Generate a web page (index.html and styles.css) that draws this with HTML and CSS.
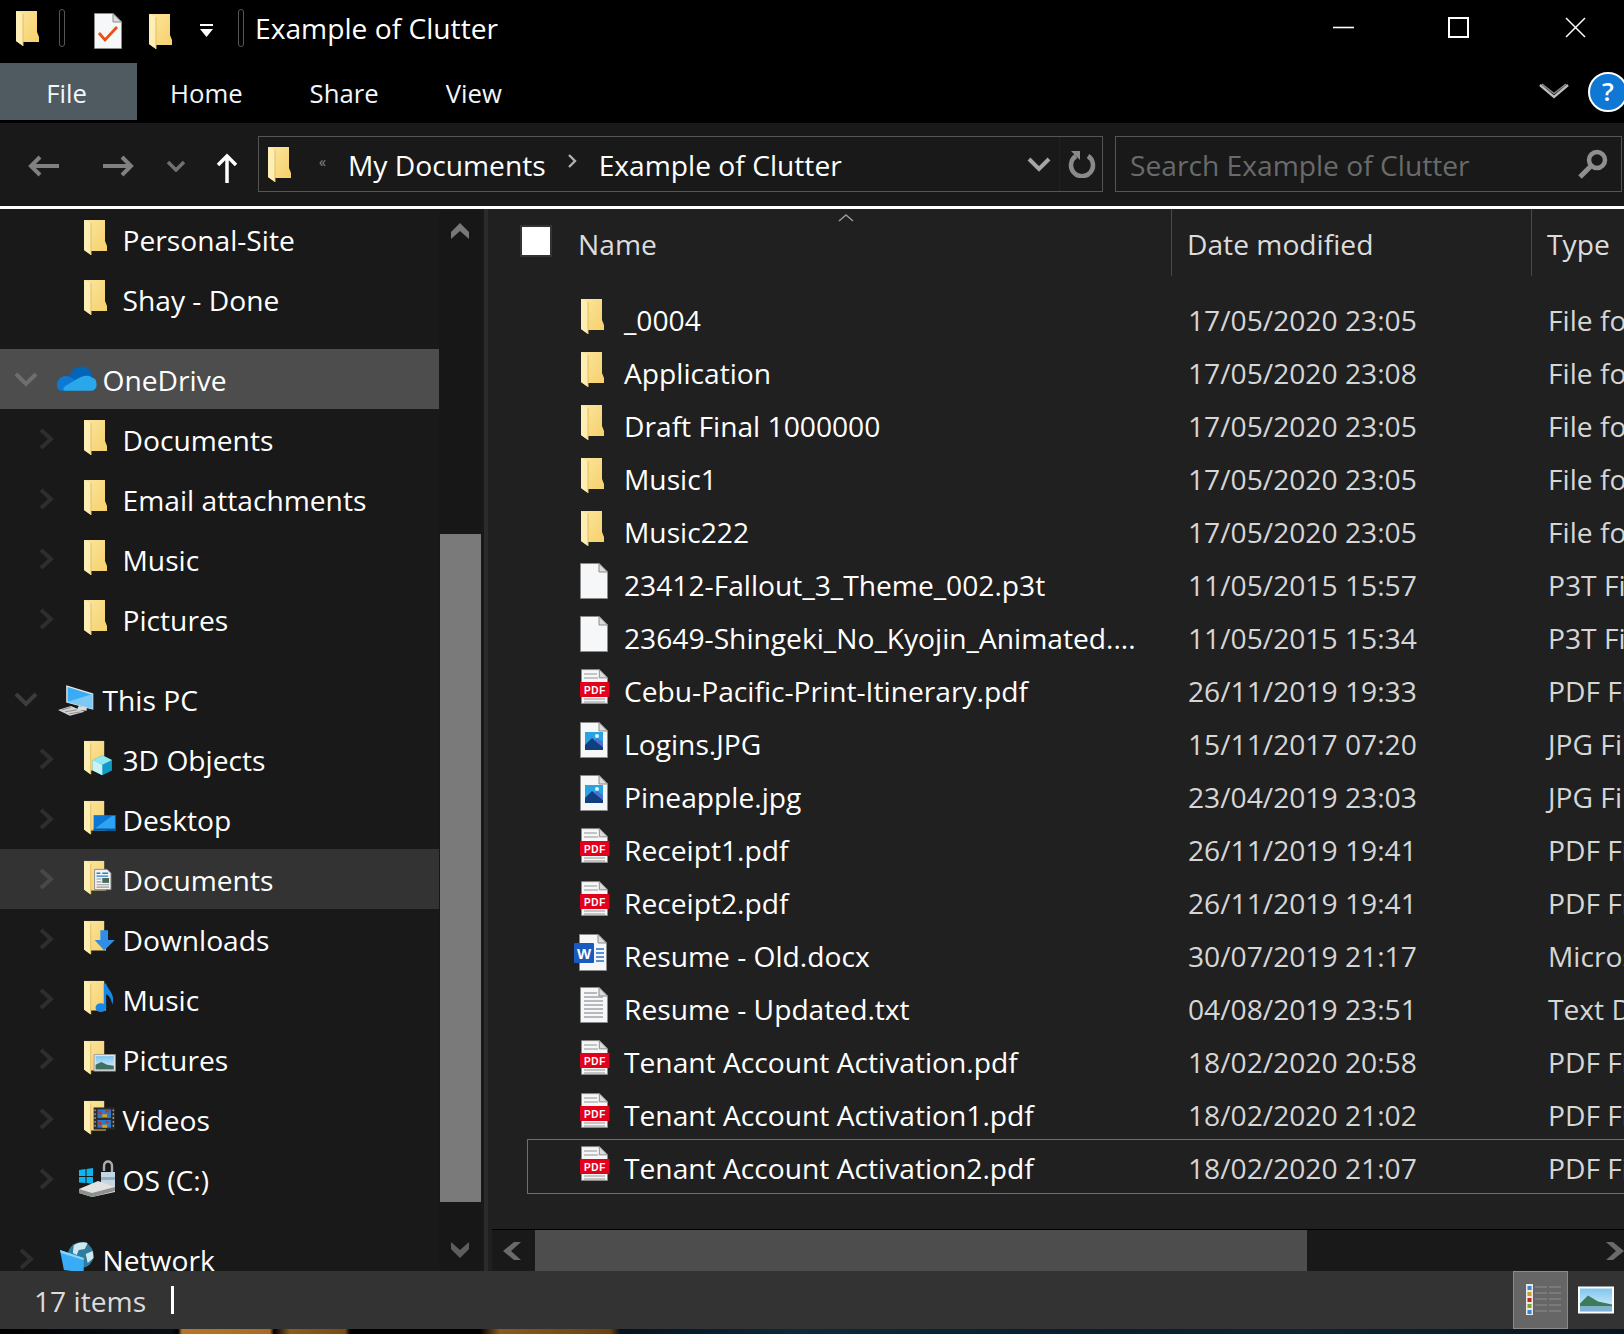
FILE: index.html
```html
<!DOCTYPE html>
<html lang="en">
<head>
    <meta charset="UTF-8">
    <title>Example of Clutter</title>
    <link rel="stylesheet" href="styles.css">
</head>
<body>
    <svg class="sprite" xmlns="http://www.w3.org/2000/svg">
        <defs>
            <linearGradient id="fold" x1="0" y1="0" x2="1" y2="1">
                <stop offset="0" stop-color="#fbe6a0"/>
                <stop offset="1" stop-color="#f6cf68"/>
            </linearGradient>
            <linearGradient id="sky" x1="0" y1="0" x2="0" y2="1">
                <stop offset="0" stop-color="#7cc4ef"/>
                <stop offset="1" stop-color="#e4f3fb"/>
            </linearGradient>
            <symbol id="folder" viewBox="0 0 23 35">
                <path d="M0 0H21V21L23 26V31H7V35L0 30Z" fill="url(#fold)"/>
                <path d="M0 0L7 3V35L0 30Z" fill="#fdeeb4"/>
                <path d="M7 3V35" stroke="#e7bd5c" stroke-width="1"/>
            </symbol>
            <symbol id="ic-3d" viewBox="0 0 40 38">
                <use href="#folder" x="0" y="0" width="23" height="35"/>
                <path d="M19 15L29 20V31L19 36L9 31V20Z" fill="#0f9bc4"/>
                <path d="M19 15L29 20L19 25L9 20Z" fill="#8fe8f0"/>
                <path d="M9 20L19 25V36L9 31Z" fill="#c9f3f5"/>
            </symbol>
            <symbol id="ic-desk" viewBox="0 0 40 38">
                <use href="#folder" x="0" y="0" width="23" height="35"/>
                <rect x="10" y="15" width="23" height="16" fill="#0a78d7"/>
                <path d="M11 29L29 16H32V29Z" fill="#2ea3f2"/>
                <rect x="10" y="29" width="23" height="2" fill="#075c9f"/>
            </symbol>
            <symbol id="ic-docs" viewBox="0 0 40 38">
                <use href="#folder" x="0" y="0" width="23" height="35"/>
                <path d="M11 9H24L28 13V30H11Z" fill="#f3f3f3" stroke="#8c8c8c"/>
                <path d="M13 13H17M19 13H25M13 16H25" stroke="#2a7fd0" stroke-width="1.4"/>
                <rect x="19" y="18" width="7" height="5" fill="#47695c"/>
                <path d="M13 19H18M13 22H18M13 25H26M13 27.500H26" stroke="#9a9a9a" stroke-width="1.2"/>
            </symbol>
            <symbol id="ic-down" viewBox="0 0 40 38">
                <use href="#folder" x="0" y="0" width="23" height="35"/>
                <path d="M17 10H25V20H32L21 31L11 20H17Z" fill="#2f8fe6"/>
            </symbol>
            <symbol id="ic-note" viewBox="0 0 40 38">
                <use href="#folder" x="0" y="0" width="23" height="35"/>
                <ellipse cx="17.500" cy="28" rx="5.500" ry="4.500" fill="#1888e8"/>
                <path d="M20.500 28V3H23C24 9 33 13 29.500 25C28.500 19 26 15 23 14V28Z" fill="#1888e8"/>
            </symbol>
            <symbol id="ic-pics" viewBox="0 0 40 38">
                <use href="#folder" x="0" y="0" width="23" height="35"/>
                <rect x="10.500" y="14.500" width="22" height="17" fill="#f2f2f2" stroke="#9a9a9a"/>
                <rect x="12" y="16" width="19" height="14" fill="url(#sky)"/>
                <path d="M12 25L18 22L24 25L31 26V30H12Z" fill="#3f6f62"/>
            </symbol>
            <symbol id="ic-vid" viewBox="0 0 40 38">
                <use href="#folder" x="0" y="0" width="23" height="35"/>
                <rect x="10" y="7" width="22" height="23" fill="#2a2a2a"/>
                <path d="M11.500 9V29M30.500 9V29" stroke="#9a9a9a" stroke-width="1.500" stroke-dasharray="2 2"/>
                <rect x="14" y="9" width="14" height="9" fill="#2f78c8"/>
                <rect x="14" y="20" width="14" height="8" fill="#2f78c8"/>
                <path d="M15 11H18V14H15ZM22 10H26V12H22ZM15 22H18V25H15ZM22 21H26V23H22Z" fill="#c5302a"/>
                <path d="M19 14H24V17H19ZM19 25H24V28H19Z" fill="#d9a21e"/>
            </symbol>
            <symbol id="ic-os" viewBox="0 0 40 38">
                <path d="M0 10L6.500 9V16H0ZM7.500 9L14 8V16H7.500ZM0 17H6.500V23L0 22.500ZM7.500 17H14V24L7.500 23Z" fill="#0cb4f0"/>
                <path d="M25 11V6C25 0 33 0 33 6V13" fill="none" stroke="#a8aeb2" stroke-width="2.400"/>
                <path d="M22 12H36V27L22 28Z" fill="#c3d6e2"/>
                <path d="M22 17H36V20H22Z" fill="#8eb0c3"/>
                <path d="M0 29L19 21L36 27V32L13 37L0 33Z" fill="#e2e2e2"/>
                <path d="M0 29L13 33L36 27V31L13 37L0 33Z" fill="#8f8f8f"/>
                <rect x="11" y="33.500" width="2" height="2" fill="#2fbf4d"/>
            </symbol>
            <symbol id="ic-cloud" viewBox="0 0 46 38">
                <path d="M13 16C14 9 22 5 28 7C32 8 35 11 36 15L30 24H13Z" fill="#0364b8"/>
                <path d="M0 25C0 20 4 16 9 16C11 16 13 17 15 18L24 24L10 31H5C2 31 0 28 0 25Z" fill="#0f78d4"/>
                <path d="M9 31C5 31 6 27 10 25L22 18C25 16 29 15 32 16C33 16 35 17 36 18C39 18 40 21 40 25C40 29 37 31 34 31Z" fill="#28a8ea"/>
            </symbol>
            <symbol id="ic-pc" viewBox="0 0 46 38">
                <path d="M10 6L36 14V29L10 22Z" fill="#38adf5" stroke="#e4e4e4" stroke-width="1.400"/>
                <path d="M10 22L36 14V29Z" fill="#7cc9f7"/>
                <path d="M22 26L30 27V31L20 30Z" fill="#dcdcdc"/>
                <path d="M1 30L14 26L28 32L13 36Z" fill="#d3d3d3"/>
                <path d="M5 30L14 27.500M8 32L20 30M12 34L24 32" stroke="#8f8f8f"/>
            </symbol>
            <symbol id="ic-net" viewBox="0 0 46 38">
                <circle cx="24" cy="15" r="13" fill="#2f7d9e"/>
                <path d="M17 5C21 2 28 1 31 3L28 9L22 10L20 15L16 13ZM29 14L36 11L37 18L31 23Z" fill="#cfe8ef"/>
                <path d="M3 10L27 18V33L7 30Z" fill="#38adf5"/>
                <path d="M3 10L27 18V20L4 13Z" fill="#8ad3fa"/>
            </symbol>
            <symbol id="ic-blank" viewBox="0 0 28 36">
                <path d="M.5.5H19L27.500 9V35.500H.5Z" fill="#f6f7f9" stroke="#8b8b8b"/>
                <path d="M19 .5V9H27.500Z" fill="#dcdcdc" stroke="#8b8b8b"/>
            </symbol>
            <symbol id="ic-pdf" viewBox="0 0 32 36">
                <use href="#ic-blank" x="1" y="0" width="27" height="35"/>
                <path d="M4 5H17M4 9H18M4 30H25M4 33H25" stroke="#b5b5b5" stroke-width="1.400"/>
                <rect x="0" y="13" width="29.500" height="15" fill="#e3001b"/>
                <text x="15" y="24.500" text-anchor="middle" font-family="Liberation Sans" font-weight="700" font-size="10" letter-spacing=".6" fill="#fff">PDF</text>
            </symbol>
            <symbol id="ic-img" viewBox="0 0 28 36">
                <use href="#ic-blank" x="0" y="0" width="28" height="36"/>
                <rect x="5" y="10" width="18" height="18" fill="#29a3e2"/>
                <circle cx="17" cy="14" r="2" fill="#dff4ff"/>
                <path d="M5 23L12 16L23 25V28H5Z" fill="#0f3f80"/>
                <path d="M14 18L17 16L23 20V25Z" fill="#4c6fd0"/>
            </symbol>
            <symbol id="ic-word" viewBox="0 0 34 37">
                <path d="M5.500.5H24L32.500 9V36.500H5.500Z" fill="#f6f7f9" stroke="#8b8b8b"/>
                <path d="M24 .5V9H32.500Z" fill="#dcdcdc" stroke="#8b8b8b"/>
                <path d="M22 15H30M22 19H30M22 23H30M22 27H30" stroke="#2a6fc8" stroke-width="1.300"/>
                <rect x="0" y="9" width="20" height="20" rx="1" fill="#185abd"/>
                <text x="10" y="24.500" text-anchor="middle" font-family="Liberation Sans" font-weight="700" font-size="15" fill="#fff">W</text>
            </symbol>
            <symbol id="ic-txt" viewBox="0 0 28 36">
                <use href="#ic-blank" x="0" y="0" width="28" height="36"/>
                <path d="M4 6H17M4 10H23M4 14H23M4 18H23M4 22H23M4 26H23M4 30H23" stroke="#a2a5a8" stroke-width="1.500"/>
            </symbol>
        </defs>
    </svg>

    <div class="window">
        <div class="titlebar">
            <svg class="folder-sm"><use href="#folder"/></svg>
            <span class="qat-sep first"></span>
            <svg class="todo" viewBox="0 0 28 36">
                <use href="#ic-blank"/>
                <path d="M5 20L11 27L23 14" fill="none" stroke="#ea4f16" stroke-width="2.800"/>
            </svg>
            <svg class="folder-sm second"><use href="#folder"/></svg>
            <svg class="qat-caret" viewBox="0 0 13 14">
                <rect width="13" height="2" y="0" fill="#fff"/>
                <path d="M0 5H13L6.500 13Z" fill="#fff"/>
            </svg>
            <span class="qat-sep"></span>
            <span class="win-title">Example of Clutter</span>
            <div class="win-btns">
                <svg viewBox="0 0 21 21"><path d="M0 10.500H21" stroke="#fff" stroke-width="1.600"/></svg>
                <svg viewBox="0 0 21 21"><rect x="1" y="1" width="19" height="19" fill="none" stroke="#fff" stroke-width="2"/></svg>
                <svg viewBox="0 0 21 21"><path d="M1 1L20 20M20 1L1 20" stroke="#fff" stroke-width="1.500"/></svg>
            </div>
        </div>

        <div class="ribbon">
            <div class="tab tab-file">File</div>
            <div class="tab">Home</div>
            <div class="tab">Share</div>
            <div class="tab">View</div>
            <svg class="collapse" viewBox="0 0 30 18">
                <path d="M1 2L15 14L29 2" fill="none" stroke="#bcbcbc" stroke-width="2.400"/>
                <path d="M3 1L15 10.500L27 1" fill="none" stroke="#8a8a8a" stroke-width="1.500"/>
            </svg>
            <div class="help">?</div>
        </div>

        <div class="addr-row">
            <svg class="nav-ic back" viewBox="0 0 31 22"><path d="M12 2L3 11L12 20M3 11H31" fill="none" stroke="#808080" stroke-width="4"/></svg>
            <svg class="nav-ic fwd" viewBox="0 0 31 22"><path d="M19 2L28 11L19 20M28 11H0" fill="none" stroke="#808080" stroke-width="4"/></svg>
            <svg class="nav-ic drop" viewBox="0 0 20 12"><path d="M2 2L10 10L18 2" fill="none" stroke="#707070" stroke-width="3.500"/></svg>
            <svg class="nav-ic up" viewBox="0 0 22 30"><path d="M2 12L11 3L20 12M11 3V30" fill="none" stroke="#fff" stroke-width="3.500"/></svg>
            <div class="addr-box">
                <svg class="addr-folder"><use href="#folder"/></svg>
                <span class="crumb-more">«</span>
                <span class="crumb">My Documents</span>
                <svg class="crumb-arrow" viewBox="0 0 10 14"><path d="M2 1L8 7L2 13" fill="none" stroke="#b0b0b0" stroke-width="2.400"/></svg>
                <span class="crumb">Example of Clutter</span>
                <svg class="addr-drop" viewBox="0 0 24 15"><path d="M2 2L12 12L22 2" fill="none" stroke="#a5a5a5" stroke-width="4"/></svg>
                <span class="addr-div"></span>
                <svg class="refresh" viewBox="0 0 28 28">
                    <path d="M8 6A11 11 0 1 0 20 6" fill="none" stroke="#8a8a8a" stroke-width="4.500"/>
                    <path d="M3 1H12V10Z" fill="#8a8a8a"/>
                </svg>
            </div>
            <div class="search-box">
                <span class="search-text">Search Example of Clutter</span>
                <svg class="search-ic" viewBox="0 0 30 30">
                    <circle cx="19" cy="11" r="8" fill="none" stroke="#8f8f8f" stroke-width="4.500"/>
                    <path d="M13 17L2 28" stroke="#8f8f8f" stroke-width="5"/>
                </svg>
            </div>
        </div>

        <div class="main">
            <div class="nav-pane">
                <div class="tree">
                    <div class="node child"><span class="chev"></span><svg class="node-ic"><use href="#folder" width="23" height="35"/></svg><span>Personal-Site</span></div>
                    <div class="node child"><span class="chev"></span><svg class="node-ic"><use href="#folder" width="23" height="35"/></svg><span>Shay - Done</span></div>

                    <div class="node root active group"><svg class="chev-down" viewBox="0 0 24 15"><path d="M2 2L12 12L22 2" fill="none" stroke="#6e6e6e" stroke-width="4"/></svg><svg class="root-ic"><use href="#ic-cloud"/></svg><span>OneDrive</span></div>
                    <div class="node child"><svg class="chev" viewBox="0 0 15 22"><path d="M2 2L12 11L2 20" fill="none" stroke="#2e2e2e" stroke-width="4"/></svg><svg class="node-ic"><use href="#folder" width="23" height="35"/></svg><span>Documents</span></div>
                    <div class="node child"><svg class="chev" viewBox="0 0 15 22"><path d="M2 2L12 11L2 20" fill="none" stroke="#2e2e2e" stroke-width="4"/></svg><svg class="node-ic"><use href="#folder" width="23" height="35"/></svg><span>Email attachments</span></div>
                    <div class="node child"><svg class="chev" viewBox="0 0 15 22"><path d="M2 2L12 11L2 20" fill="none" stroke="#2e2e2e" stroke-width="4"/></svg><svg class="node-ic"><use href="#folder" width="23" height="35"/></svg><span>Music</span></div>
                    <div class="node child"><svg class="chev" viewBox="0 0 15 22"><path d="M2 2L12 11L2 20" fill="none" stroke="#2e2e2e" stroke-width="4"/></svg><svg class="node-ic"><use href="#folder" width="23" height="35"/></svg><span>Pictures</span></div>

                    <div class="node root group"><svg class="chev-down" viewBox="0 0 24 15"><path d="M2 2L12 12L22 2" fill="none" stroke="#3c3c3c" stroke-width="4"/></svg><svg class="root-ic"><use href="#ic-pc"/></svg><span>This PC</span></div>
                    <div class="node child"><svg class="chev" viewBox="0 0 15 22"><path d="M2 2L12 11L2 20" fill="none" stroke="#2e2e2e" stroke-width="4"/></svg><svg class="node-ic"><use href="#ic-3d"/></svg><span>3D Objects</span></div>
                    <div class="node child"><svg class="chev" viewBox="0 0 15 22"><path d="M2 2L12 11L2 20" fill="none" stroke="#2e2e2e" stroke-width="4"/></svg><svg class="node-ic"><use href="#ic-desk"/></svg><span>Desktop</span></div>
                    <div class="node child hover"><svg class="chev" viewBox="0 0 15 22"><path d="M2 2L12 11L2 20" fill="none" stroke="#484848" stroke-width="4"/></svg><svg class="node-ic"><use href="#ic-docs"/></svg><span>Documents</span></div>
                    <div class="node child"><svg class="chev" viewBox="0 0 15 22"><path d="M2 2L12 11L2 20" fill="none" stroke="#2e2e2e" stroke-width="4"/></svg><svg class="node-ic"><use href="#ic-down"/></svg><span>Downloads</span></div>
                    <div class="node child"><svg class="chev" viewBox="0 0 15 22"><path d="M2 2L12 11L2 20" fill="none" stroke="#2e2e2e" stroke-width="4"/></svg><svg class="node-ic"><use href="#ic-note"/></svg><span>Music</span></div>
                    <div class="node child"><svg class="chev" viewBox="0 0 15 22"><path d="M2 2L12 11L2 20" fill="none" stroke="#2e2e2e" stroke-width="4"/></svg><svg class="node-ic"><use href="#ic-pics"/></svg><span>Pictures</span></div>
                    <div class="node child"><svg class="chev" viewBox="0 0 15 22"><path d="M2 2L12 11L2 20" fill="none" stroke="#2e2e2e" stroke-width="4"/></svg><svg class="node-ic"><use href="#ic-vid"/></svg><span>Videos</span></div>
                    <div class="node child"><svg class="chev" viewBox="0 0 15 22"><path d="M2 2L12 11L2 20" fill="none" stroke="#2e2e2e" stroke-width="4"/></svg><svg class="node-ic os"><use href="#ic-os"/></svg><span>OS (C:)</span></div>

                    <div class="node root group"><svg class="chev net" viewBox="0 0 15 22"><path d="M2 2L12 11L2 20" fill="none" stroke="#2e2e2e" stroke-width="4"/></svg><svg class="root-ic"><use href="#ic-net"/></svg><span>Network</span></div>
                </div>
                <div class="v-scroll">
                    <svg class="v-arrow" viewBox="0 0 18 16"><path d="M0 16V9L9 0L18 9V16L9 8Z" fill="#787878"/></svg>
                    <div class="v-thumb"></div>
                    <svg class="v-arrow down" viewBox="0 0 18 16"><path d="M0 0V7L9 16L18 7V0L9 8Z" fill="#5e5e5e"/></svg>
                </div>
            </div>
            <div class="splitter"></div>

            <div class="list-pane">
                <div class="list-head">
                    <div class="col col-name">
                        <span class="check"></span>
                        <span>Name</span>
                        <svg class="sort" viewBox="0 0 16 8"><path d="M1 7L8 1L15 7" fill="none" stroke="#9a9a9a" stroke-width="1.500"/></svg>
                    </div>
                    <div class="col col-date">Date modified</div>
                    <div class="col col-type">Type</div>
                </div>
                <div class="rows">
                    <div class="row"><svg class="f-ic folder"><use href="#folder" width="23" height="35"/></svg><span>_0004</span><span class="dim">17/05/2020 23:05</span><span class="dim">File folder</span></div>
                    <div class="row"><svg class="f-ic folder"><use href="#folder" width="23" height="35"/></svg><span>Application</span><span class="dim">17/05/2020 23:08</span><span class="dim">File folder</span></div>
                    <div class="row"><svg class="f-ic folder"><use href="#folder" width="23" height="35"/></svg><span>Draft Final 1000000</span><span class="dim">17/05/2020 23:05</span><span class="dim">File folder</span></div>
                    <div class="row"><svg class="f-ic folder"><use href="#folder" width="23" height="35"/></svg><span>Music1</span><span class="dim">17/05/2020 23:05</span><span class="dim">File folder</span></div>
                    <div class="row"><svg class="f-ic folder"><use href="#folder" width="23" height="35"/></svg><span>Music222</span><span class="dim">17/05/2020 23:05</span><span class="dim">File folder</span></div>
                    <div class="row"><svg class="f-ic"><use href="#ic-blank" width="28" height="36"/></svg><span>23412-Fallout_3_Theme_002.p3t</span><span class="dim">11/05/2015 15:57</span><span class="dim">P3T File</span></div>
                    <div class="row"><svg class="f-ic"><use href="#ic-blank" width="28" height="36"/></svg><span>23649-Shingeki_No_Kyojin_Animated....</span><span class="dim">11/05/2015 15:34</span><span class="dim">P3T File</span></div>
                    <div class="row"><svg class="f-ic"><use href="#ic-pdf" width="32" height="36"/></svg><span>Cebu-Pacific-Print-Itinerary.pdf</span><span class="dim">26/11/2019 19:33</span><span class="dim">PDF File</span></div>
                    <div class="row"><svg class="f-ic"><use href="#ic-img" width="28" height="36"/></svg><span>Logins.JPG</span><span class="dim">15/11/2017 07:20</span><span class="dim">JPG File</span></div>
                    <div class="row"><svg class="f-ic"><use href="#ic-img" width="28" height="36"/></svg><span>Pineapple.jpg</span><span class="dim">23/04/2019 23:03</span><span class="dim">JPG File</span></div>
                    <div class="row"><svg class="f-ic"><use href="#ic-pdf" width="32" height="36"/></svg><span>Receipt1.pdf</span><span class="dim">26/11/2019 19:41</span><span class="dim">PDF File</span></div>
                    <div class="row"><svg class="f-ic"><use href="#ic-pdf" width="32" height="36"/></svg><span>Receipt2.pdf</span><span class="dim">26/11/2019 19:41</span><span class="dim">PDF File</span></div>
                    <div class="row"><svg class="f-ic word"><use href="#ic-word" width="34" height="37"/></svg><span>Resume - Old.docx</span><span class="dim">30/07/2019 21:17</span><span class="dim">Microsoft Word Document</span></div>
                    <div class="row"><svg class="f-ic"><use href="#ic-txt" width="28" height="36"/></svg><span>Resume - Updated.txt</span><span class="dim">04/08/2019 23:51</span><span class="dim">Text Document</span></div>
                    <div class="row"><svg class="f-ic"><use href="#ic-pdf" width="32" height="36"/></svg><span>Tenant Account Activation.pdf</span><span class="dim">18/02/2020 20:58</span><span class="dim">PDF File</span></div>
                    <div class="row"><svg class="f-ic"><use href="#ic-pdf" width="32" height="36"/></svg><span>Tenant Account Activation1.pdf</span><span class="dim">18/02/2020 21:02</span><span class="dim">PDF File</span></div>
                    <div class="row selected"><svg class="f-ic"><use href="#ic-pdf" width="32" height="36"/></svg><span>Tenant Account Activation2.pdf</span><span class="dim">18/02/2020 21:07</span><span class="dim">PDF File</span></div>
                </div>
                <div class="h-scroll">
                    <div class="h-btn"><svg viewBox="0 0 18 18"><path d="M18 0H11L0 9L11 18H18L8 9Z" fill="#6a6a6a"/></svg></div>
                    <div class="h-thumb"></div>
                    <div class="h-btn right"><svg viewBox="0 0 18 18"><path d="M0 0H7L18 9L7 18H0L10 9Z" fill="#6a6a6a"/></svg></div>
                </div>
            </div>
        </div>

        <div class="statusbar">
            <span class="count">17 items</span>
            <span class="status-sep"></span>
            <div class="view-btn on">
                <svg viewBox="0 0 36 32">
                    <rect x="0" y="0" width="7" height="31" fill="#e8e8e8"/>
                    <rect x="1.500" y="2" width="4" height="4" fill="#3a86c8"/>
                    <rect x="1.500" y="8" width="4" height="4" fill="#c9a227"/>
                    <rect x="1.500" y="14" width="4" height="4" fill="#c4281c"/>
                    <rect x="1.500" y="20" width="4" height="4" fill="#7fa32a"/>
                    <rect x="1.500" y="26" width="4" height="4" fill="#3a86c8"/>
                    <path d="M9 3H21M9 9H21M9 15H21M9 21H21M9 27H21M23 3H35M23 9H35M23 15H35M23 21H35M23 27H35" stroke="#8e8e8e" stroke-width="1"/>
                </svg>
            </div>
            <div class="view-btn">
                <svg viewBox="0 0 36 27">
                    <rect x="1" y="1" width="34" height="25" fill="url(#sky)" stroke="#fff" stroke-width="2"/>
                    <path d="M2 17L10 9L20 15L34 18V20H2Z" fill="#3c7a5c"/>
                    <rect x="2" y="20" width="32" height="5" fill="#7fb4d8"/>
                </svg>
            </div>
        </div>
        <div class="wallpaper"></div>
    </div>
</body>
</html>
```

FILE: styles.css
```css
* {
    margin: 0;
    padding: 0;
    box-sizing: border-box;
}

html, body {
    height: 100%;
    background: #000;
    overflow: hidden;
}

body {
    font-family: "Open Sans", "Noto Sans", sans-serif;
    color: #fff;
}

svg {
    display: block;
    flex: none;
}

.sprite {
    width: 0;
    height: 0;
}

.window {
    width: 1624px;
    height: 1334px;
    display: flex;
    flex-direction: column;
    overflow: hidden;
}

/* title bar */
.titlebar {
    height: 63px;
    padding: 0 38px 7px 16px;
    display: flex;
    align-items: center;
    flex: none;
}

.folder-sm {
    width: 23px;
    height: 35px;
}

.folder-sm.second {
    margin-left: 27px;
    margin-top: 6px;
}

.qat-sep {
    width: 6px;
    height: 38px;
    border: 1px solid #555;
    border-radius: 3px;
    margin-left: 25px;
}

.qat-sep.first {
    margin-left: 20px;
}

.todo {
    width: 28px;
    height: 36px;
    margin-left: 29px;
    margin-top: 6px;
}

.qat-caret {
    width: 13px;
    height: 14px;
    margin-left: 28px;
    margin-top: 6px;
}

.win-title {
    margin-left: 11px;
    font-size: 28.2px;
    line-height: 40px;
}

.win-btns {
    margin-left: auto;
    display: flex;
    gap: 96px;
    margin-bottom: 2px;
}

.win-btns svg {
    width: 21px;
    height: 21px;
}

.win-btns svg:first-child {
    margin-right: -2px;
}

/* ribbon tabs */
.ribbon {
    height: 60px;
    display: flex;
    align-items: flex-start;
    flex: none;
}

.tab {
    height: 57px;
    line-height: 61px;
    font-size: 25.7px;
    margin-left: 67px;
    color: #f2f7fb;
}

.tab-file {
    width: 137px;
    margin: 0;
    padding-right: 4px;
    background: #4f5b60;
    text-align: center;
}

.tab-file + .tab {
    margin-left: 33px;
}

.collapse {
    width: 30px;
    height: 18px;
    margin: 20px 0 0 auto;
}

.help {
    width: 40px;
    height: 40px;
    border-radius: 50%;
    background: #0f78d4;
    border: 2px solid #fff;
    margin: 9px -4px 0 19px;
    text-align: center;
    font-size: 26px;
    line-height: 34px;
    font-weight: 600;
}

/* address row */
.addr-row {
    height: 86px;
    flex: none;
    background: #191919;
    border-bottom: 3px solid #fff;
    padding: 13px 2px 0 0;
    display: flex;
    align-items: flex-start;
}

.nav-ic {
    margin-top: 19px;
}

.back {
    width: 31px;
    height: 22px;
    margin-left: 28px;
}

.fwd {
    width: 31px;
    height: 22px;
    margin-left: 44px;
}

.drop {
    width: 20px;
    height: 12px;
    margin-left: 32px;
    margin-top: 24px;
}

.up {
    width: 22px;
    height: 30px;
    margin-left: 30px;
    margin-top: 17px;
}

.addr-box {
    width: 845px;
    height: 56px;
    margin-left: 20px;
    border: 1px solid #555;
    display: flex;
    align-items: center;
    font-size: 28.2px;
}

.crumb {
    padding-top: 2px;
}

.addr-folder {
    width: 23px;
    height: 35px;
    margin-left: 9px;
}

.crumb-more {
    font-size: 14px;
    color: #8a8a8a;
    margin-left: 28px;
    width: 29px;
    margin-bottom: 6px;
}

.crumb-arrow {
    width: 10px;
    height: 14px;
    margin: 0 22px 6px 21px;
}

.addr-drop {
    width: 24px;
    height: 15px;
    margin-left: auto;
}

.addr-div {
    width: 1px;
    height: 100%;
    background: #202020;
    margin-left: 8px;
}

.refresh {
    width: 28px;
    height: 28px;
    margin: 0 6px 0 8px;
}

.search-box {
    width: 507px;
    height: 56px;
    margin-left: 12px;
    border: 1px solid #555;
    display: flex;
    align-items: center;
    padding: 0 13px 0 14px;
}

.search-text {
    font-size: 28.2px;
    color: #6a6a6a;
    padding-top: 2px;
}

.search-ic {
    width: 30px;
    height: 30px;
    margin-left: auto;
}

/* main area */
.main {
    height: 1062px;
    flex: none;
    display: flex;
}

.nav-pane {
    width: 484px;
    background: #191919;
    display: flex;
    flex: none;
}

.tree {
    width: 439px;
    overflow: hidden;
    font-size: 28.2px;
}

.node {
    height: 60px;
    padding-top: 2px;
    display: flex;
    align-items: center;
    white-space: nowrap;
}

.node svg {
    margin-bottom: 2px;
}

.node.group {
    margin-top: 20px;
}

.node.active {
    background: #4d4d4d;
}

.node.hover {
    background: #333;
}

.chev {
    width: 15px;
    height: 22px;
    margin: 0 30px 2px 39px;
}

.chev.net {
    margin: 0 23px 2px 19px;
}

.chev-down {
    width: 24px;
    height: 15px;
    margin: 0 19px 2px 14px;
}

.node-ic {
    width: 38.5px;
    height: 38px;
}

.node-ic.os {
    width: 40px;
    height: 38px;
    margin: 0 3.5px 2px -5px;
}

.root-ic {
    width: 45.5px;
    height: 38px;
}

.v-scroll {
    width: 42px;
    background: #171717;
    display: flex;
    flex-direction: column;
    align-items: center;
}

.v-arrow {
    width: 18px;
    height: 16px;
    margin-top: 14px;
}

.v-arrow.down {
    margin: 40px 0 0;
}

.v-thumb {
    width: 41px;
    height: 668px;
    margin-top: 295px;
    background: #7a7a7a;
}

.splitter {
    width: 4px;
    flex: none;
    background: #2b2b2b;
}

.list-pane {
    flex: 1;
    min-width: 0;
    background: #202020;
    display: flex;
    flex-direction: column;
    overflow: hidden;
}

.list-head {
    height: 67px;
    flex: none;
    display: flex;
    color: #dcdcdc;
    font-size: 28.2px;
}

.col {
    height: 100%;
    padding-top: 2px;
    display: flex;
    align-items: center;
    position: relative;
}

.col-name {
    width: 683px;
    padding-left: 32px;
}

.col-date {
    width: 360px;
    padding-left: 15px;
    border-left: 1px solid #4a4a4a;
}

.col-type {
    flex: 1;
    padding-left: 15px;
    border-left: 1px solid #4a4a4a;
}

.check {
    width: 32px;
    height: 32px;
    background: #fff;
    border: 2px solid #333;
    margin-right: 26px;
    margin-bottom: 6px;
}

.sort {
    position: absolute;
    left: 350px;
    top: 5px;
    width: 16px;
    height: 8px;
}

.rows {
    flex: 1;
    padding: 15px 0 0 39px;
    margin-right: -4px;
    font-size: 28.2px;
}

.row {
    height: 55px;
    margin-bottom: -2px;
    padding-top: 2px;
    border: 1px solid transparent;
    display: grid;
    grid-template-columns: 96px 564px 360px 1fr;
    align-items: center;
    white-space: nowrap;
}

.row.selected {
    border-color: #6f6f6f;
}

.row .dim {
    color: #d6d6d6;
}

.f-ic {
    width: 32px;
    height: 36px;
    margin: -7px 0 0 52px;
}

.f-ic.folder {
    width: 23px;
    height: 35px;
    margin-left: 53px;
}

.f-ic.word {
    width: 34px;
    height: 37px;
    margin-left: 46px;
}

.h-scroll {
    height: 42px;
    flex: none;
    display: flex;
    margin-left: 4px;
    background: #191919;
    border-top: 1px solid #000;
}

.h-btn {
    width: 43px;
    padding-right: 4px;
    display: flex;
    align-items: center;
    justify-content: center;
}

.h-btn svg {
    width: 18px;
    height: 18px;
}

.h-btn.right {
    margin-left: auto;
    width: 32px;
    justify-content: flex-start;
    padding: 0 0 0 14px;
}

.h-thumb {
    width: 772px;
    background: #4d4d4d;
}

/* status bar */
.statusbar {
    height: 58px;
    flex: none;
    background: #333;
    display: flex;
    align-items: center;
    padding-left: 34px;
    color: #dcdcdc;
    font-size: 28.2px;
}

.count {
    padding-top: 2px;
}

.status-sep {
    width: 3px;
    height: 28px;
    background: #fff;
    margin-left: 25px;
}

.view-btn {
    width: 55px;
    height: 100%;
    display: flex;
    align-items: center;
    justify-content: center;
}

.view-btn.on {
    margin-left: auto;
    padding-left: 6px;
    background: #666;
    border: 1px solid #8a8a8a;
}

.view-btn svg {
    width: 36px;
    height: 32px;
}

.view-btn:last-child {
    width: 56px;
}

.wallpaper {
    flex: 1;
    background: linear-gradient(90deg, #000 0, #05101a 170px, #000 178px, #b5752a 182px, #a96a24 270px, #000 274px, #8a5c1c 290px, #7a4c12 345px, #000 350px, #000 480px, #8a5a20 500px, #6a420f 610px, #05121f 620px, #0b2a3c 800px, #071e2c 1100px, #0d2433 1300px, #06141f 1624px);
}
```
